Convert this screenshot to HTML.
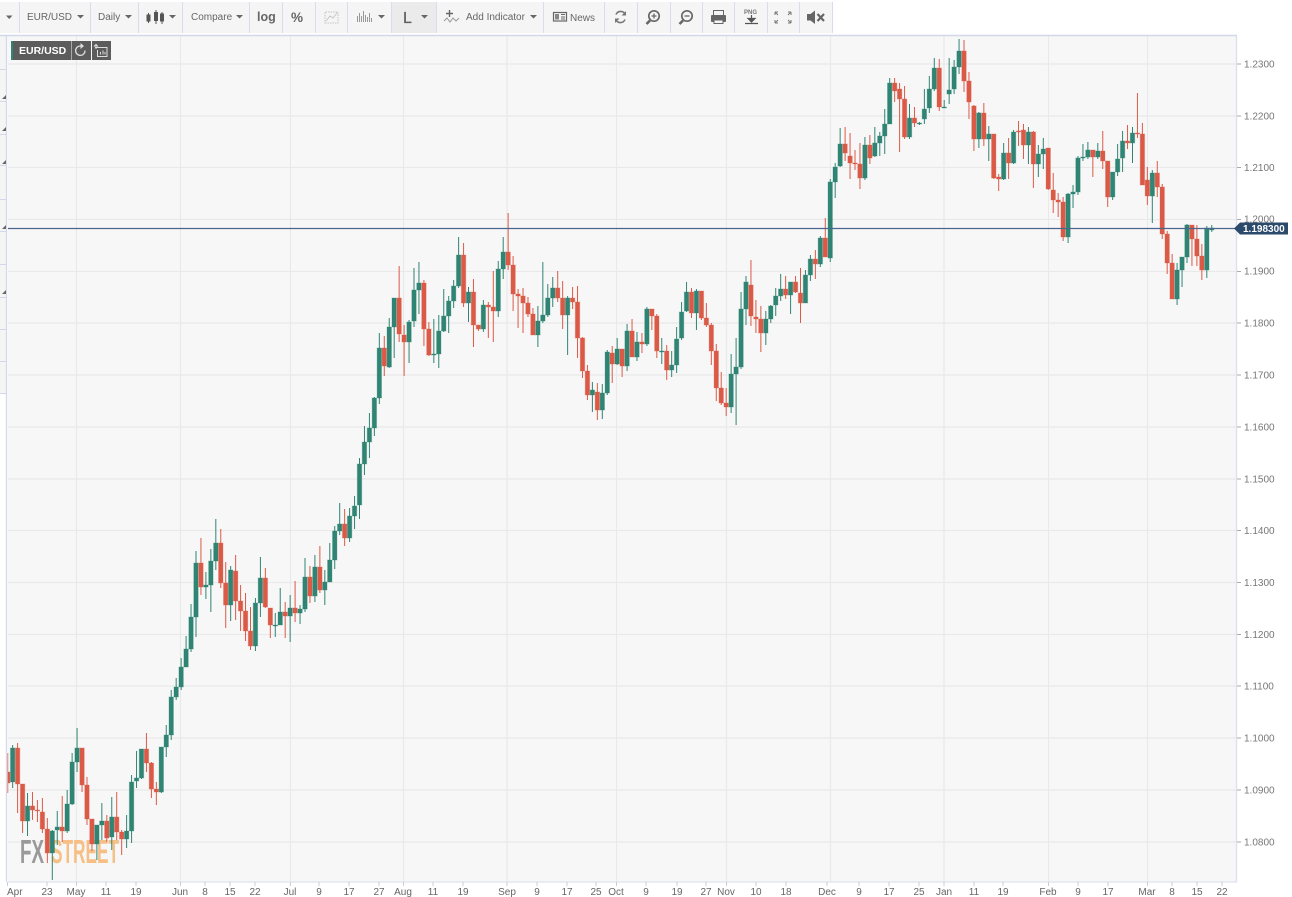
<!DOCTYPE html>
<html><head><meta charset="utf-8"><title>EUR/USD</title>
<style>
html,body{margin:0;padding:0;background:#fff;width:1292px;height:897px;overflow:hidden}
svg{display:block;position:absolute;left:0;top:0;filter:blur(.3px)}
text{font-family:"Liberation Sans",Arial,sans-serif}
.t{font-size:10px;fill:#666}
.p{font-size:10px;fill:#777}
.x{font-size:10px;fill:#666;text-anchor:middle}
</style></head><body>
<svg width="1292" height="897" viewBox="0 0 1292 897" xmlns="http://www.w3.org/2000/svg">
<defs><clipPath id="cl"><rect x="7.500" y="36" width="1229" height="846"/></clipPath></defs>
<rect x="8" y="36" width="1229" height="846" fill="#f7f7f7"/>
<!-- left sidebar -->
<g>
<rect x="0" y="36" width="7" height="358" fill="#f5f5f5"/>
<path d="M0 69.5H7M0 101.5H7M0 134.5H7M0 165.5H7M0 199.5H7M0 231.5H7M0 264.5H7M0 297.5H7M0 329.5H7M0 361.5H7M0 393.5H7" stroke="#d3d8e8" stroke-width="1"/>
<path d="M6.5 36V882" stroke="#d5daea" stroke-width="1.4"/>
<path d="M2 99L6 95V99ZM2 131L6 127V131ZM2 164L6 160V164ZM2 229L6 225V229ZM2 294L6 290V294Z" fill="#666"/>
</g>
<!-- grid -->
<path d="M8 64H1237M8 116H1237M8 167.5H1237M8 219.5H1237M8 271.5H1237M8 323H1237M8 375H1237M8 427H1237M8 479H1237M8 530.5H1237M8 582.5H1237M8 634.5H1237M8 686H1237M8 738H1237M8 790H1237M8 842H1237" stroke="#e9e9e9" stroke-width="1.2" fill="none"/>
<path d="M76.5 36V882M180.5 36V882M290.5 36V882M403.5 36V882M507 36V882M616.5 36V882M726.5 36V882M830.5 36V882M944 36V882M1048.5 36V882M1147.5 36V882" stroke="#e9e9e9" stroke-width="1.2" fill="none"/>
<!-- watermark -->
<text x="20" y="863" font-size="33" font-weight="700" fill="#9a9a9a" textLength="24" lengthAdjust="spacingAndGlyphs">FX</text>
<text x="51" y="863" font-size="33" font-weight="700" fill="#f6bf86" textLength="68" lengthAdjust="spacingAndGlyphs">STREET</text>
<g id="c" clip-path="url(#cl)"></g>
<!-- price line -->
<path d="M8 228.5H1237" stroke="#4a668c" stroke-width="1.2"/>
<!-- axes -->
<path d="M1236.5 36V882" stroke="#dde1ee" stroke-width="1.4"/>
<path d="M8 882H1237" stroke="#dfe3ef" stroke-width="1.2"/>
<path d="M1237 64H1241M1237 116H1241M1237 167.5H1241M1237 219.5H1241M1237 271.5H1241M1237 323H1241M1237 375H1241M1237 427H1241M1237 479H1241M1237 530.5H1241M1237 582.5H1241M1237 634.5H1241M1237 686H1241M1237 738H1241M1237 790H1241M1237 842H1241" stroke="#aaa" stroke-width="1"/>
<g class="p">
<text class="p" x="1244" y="67.5">1.2300</text><text class="p" x="1244" y="119.5">1.2200</text><text class="p" x="1244" y="171">1.2100</text><text class="p" x="1244" y="222.5">1.2000</text><text class="p" x="1244" y="274.5">1.1900</text><text class="p" x="1244" y="326.5">1.1800</text><text class="p" x="1244" y="378.5">1.1700</text><text class="p" x="1244" y="430.5">1.1600</text><text class="p" x="1244" y="482.5">1.1500</text><text class="p" x="1244" y="534">1.1400</text><text class="p" x="1244" y="586">1.1300</text><text class="p" x="1244" y="638">1.1200</text><text class="p" x="1244" y="689.5">1.1100</text><text class="p" x="1244" y="741.5">1.1000</text><text class="p" x="1244" y="793.5">1.0900</text><text class="p" x="1244" y="845.5">1.0800</text>
</g>
<path d="M1234 228.5L1240 222.5H1288V234.5H1240Z" fill="#2c4a6b"/>
<text x="1243" y="232" font-size="10" font-weight="700" fill="#fff">1.198300</text>
<!-- x labels -->
<path d="M7.5 882V886M47 882V886M76.5 882V886M106 882V886M136 882V886M180.5 882V886M205 882V886M230 882V886M255 882V886M290.5 882V886M319 882V886M349 882V886M379 882V886M403.5 882V886M433 882V886M463 882V886M507 882V886M537 882V886M567 882V886M596 882V886M616.5 882V886M646 882V886M677 882V886M706 882V886M726.5 882V886M756 882V886M786 882V886M827 882V886M859 882V886M889 882V886M919 882V886M944 882V886M974 882V886M1003 882V886M1048.5 882V886M1078 882V886M1108 882V886M1147.5 882V886M1172 882V886M1197 882V886M1222 882V886" stroke="#c8cddc" stroke-width="1"/>
<text x="7" y="895" class="t">Apr</text>
<text class="x" x="47" y="895">23</text><text class="x" x="76" y="895">May</text><text class="x" x="106" y="895">11</text><text class="x" x="136" y="895">19</text><text class="x" x="180" y="895">Jun</text><text class="x" x="205" y="895">8</text><text class="x" x="230" y="895">15</text><text class="x" x="255" y="895">22</text><text class="x" x="290" y="895">Jul</text><text class="x" x="319" y="895">9</text><text class="x" x="349" y="895">17</text><text class="x" x="379" y="895">27</text><text class="x" x="403" y="895">Aug</text><text class="x" x="433" y="895">11</text><text class="x" x="463" y="895">19</text><text class="x" x="507" y="895">Sep</text><text class="x" x="537" y="895">9</text><text class="x" x="567" y="895">17</text><text class="x" x="596" y="895">25</text><text class="x" x="616" y="895">Oct</text><text class="x" x="646" y="895">9</text><text class="x" x="677" y="895">19</text><text class="x" x="706" y="895">27</text><text class="x" x="726" y="895">Nov</text><text class="x" x="756" y="895">10</text><text class="x" x="786" y="895">18</text><text class="x" x="827" y="895">Dec</text><text class="x" x="859" y="895">9</text><text class="x" x="889" y="895">17</text><text class="x" x="919" y="895">25</text><text class="x" x="944" y="895">Jan</text><text class="x" x="974" y="895">11</text><text class="x" x="1003" y="895">19</text><text class="x" x="1048" y="895">Feb</text><text class="x" x="1078" y="895">9</text><text class="x" x="1108" y="895">17</text><text class="x" x="1147" y="895">Mar</text><text class="x" x="1172" y="895">8</text><text class="x" x="1197" y="895">15</text><text class="x" x="1222" y="895">22</text>
<!-- toolbar -->
<rect x="0" y="2" width="833" height="31" fill="#f5f5f5"/>
<rect x="391" y="2" width="45" height="31" fill="#ebebeb"/>
<path d="M0 35.5H1237" stroke="#d2d8ea" stroke-width="1.4"/>
<path d="M19.5 2V33M90.5 2V33M138.5 2V33M182.5 2V33M249.5 2V33M282.5 2V33M315.5 2V33M347.5 2V33M391.5 2V33M436.5 2V33M543.5 2V33M604.5 2V33M637.5 2V33M670.5 2V33M702.5 2V33M734.5 2V33M767.5 2V33M799.5 2V33M832.5 2V33" stroke="#d8ddec" stroke-width="1"/>
<g fill="#666">
<path d="M6 15.5H12.5L9.2 19ZM77 15H84L80.5 18.5ZM125 15H132L128.5 18.5ZM169 15H176L172.5 18.5ZM236 15H243L239.5 18.5ZM378 15H385L381.5 18.5ZM421 15H428L424.5 18.5ZM530 15H537L533.5 18.5Z"/>
</g>
<text x="27" y="20" class="t">EUR/USD</text>
<text x="98" y="20" class="t">Daily</text>
<text x="191" y="20" class="t">Compare</text>
<text x="257" y="21" font-size="12.5" font-weight="700" fill="#666">log</text>
<text x="291" y="22" font-size="13.5" font-weight="700" fill="#666">%</text>
<text x="403" y="23" font-size="16" font-weight="400" fill="#606060" stroke="#606060" stroke-width=".25">L</text>
<text x="466" y="20" class="t">Add Indicator</text>
<text x="570" y="21" class="t">News</text>
<!-- candle icon -->
<g fill="#555" stroke="#555" stroke-width="1"><path d="M148.5 13V23M156 10V24M162 12V24" fill="none"/><rect x="147" y="15" width="3" height="6"/><rect x="154.5" y="12.5" width="3" height="8"/><rect x="160.5" y="14" width="3" height="7"/></g>
<!-- dim chart icon -->
<g stroke="#c4c4c4" stroke-width="1" fill="none"><path d="M325 23H338V12H325V23Z" stroke-dasharray="1.5 1"/><path d="M326 21L330 16L333 18L337 13"/></g>
<!-- bars icon -->
<path d="M357.5 22V16M359.5 22V13M361.5 22V16M363.5 22V11M365.5 22V15M367.5 22V17M369.5 22V13M371.5 22V18" stroke="#999" stroke-width="1" fill="none"/>
<!-- add indicator icon -->
<g fill="none" stroke="#777" stroke-width="1"><path d="M449.5 10V17M446 13.5H453" stroke-width="1.4" stroke="#666"/><path d="M444 21L447 18L450 22L453 18L456 21L459 18" stroke="#999"/></g>
<!-- news icon -->
<g fill="none" stroke="#666" stroke-width="1.2"><rect x="553.5" y="12.5" width="13" height="8.5"/><rect x="555" y="14" width="4" height="5.5" fill="#888" stroke="none"/><path d="M561 14.5H565M561 17H565M561 19H565" stroke-width=".9"/></g>
<!-- refresh -->
<g fill="none" stroke="#777" stroke-width="1.6"><path d="M616 14.5A5 5 0 0 1 625 14"/><path d="M625 19.5A5 5 0 0 1 616 20"/></g>
<path d="M626 11V15.5H621.5ZM615 23V18.5H619.5Z" fill="#777"/>
<!-- zoom in/out -->
<g fill="none" stroke="#666" stroke-width="1.7"><circle cx="654" cy="16" r="5.2"/><path d="M650 20.5L646.5 24" stroke-width="2.6"/><path d="M651.5 16H656.5M654 13.5V18.5" stroke-width="1.3"/><circle cx="687" cy="16" r="5.2"/><path d="M683 20.5L679.5 24" stroke-width="2.6"/><path d="M684.5 16H689.5" stroke-width="1.3"/></g>
<!-- print -->
<g><rect x="711" y="15" width="15" height="7" rx="1" fill="#666"/><rect x="713.5" y="10.5" width="10" height="5" fill="#f5f5f5" stroke="#666"/><rect x="714" y="20" width="9" height="3.5" fill="#f5f5f5" stroke="#666" stroke-width="1"/></g>
<!-- png -->
<text x="744" y="14" font-size="6" font-weight="700" fill="#777">PNG</text>
<path d="M751.5 15V21M748 18.5L751.5 22L755 18.5ZM745 23.5H758" stroke="#555" stroke-width="1.2" fill="#555"/>
<!-- fullscreen -->
<g fill="none" stroke="#777" stroke-width="1"><path d="M775 12H778M775 12V15M775 12L778 15M791 12H788M791 12V15M791 12L788 15M775 23H778M775 23V20M775 23L778 20M791 23H788M791 23V20M791 23L788 20"/></g>
<!-- mute -->
<path d="M807 14H810.5L815 10.5V24L810.5 20.5H807Z" fill="#666"/>
<path d="M817.5 14L824 21M824 14L817.5 21" stroke="#666" stroke-width="2.2" fill="none"/>
<!-- label box -->
<rect x="11" y="41" width="60" height="19" fill="#5c5c5c"/>
<rect x="11" y="41" width="2" height="19" fill="#2f8473"/>
<text x="19" y="54" font-size="10.5" font-weight="700" fill="#fff">EUR/USD</text>
<rect x="71.500" y="41" width="19.5" height="19" fill="#5c5c5c"/>
<rect x="92" y="41" width="19" height="19" fill="#5c5c5c"/>
<path d="M85 50.500A4.700 4.700 0 1 1 80.500 46" fill="none" stroke="#ddd" stroke-width="1.3"/>
<path d="M80.500 43V49L84 46Z" fill="#ddd"/>
<g fill="none" stroke="#ddd" stroke-width="1"><path d="M95 47.500H107V56.500H97.500V50"/><path d="M100.500 54.500V52M103 54.500V50.500M105 54.500V52" /><path d="M96 44.500V49M94 46.500L96 44.500L98 46.500"/></g>
</svg>
<script>
var d="r772,783,753,793 g748,782,745,788 r748,784,743,813 r784,821,784,833 g806,821,793,836 r806,810,792,820 r810,811,800,822 r812,829,798,833 r829,853,818,863 g831,853,830,880 g827,830,811,845 r827,831,796,842 g804,831,790,833 g762,804,753,805 g748,762,728,772 r748,785,748,792 r785,819,777,825 r819,844,819,851 g825,844,825,860 g821,825,803,840 r821,838,815,842 g817,837,797,850 r817,832,792,840 r832,839,830,855 g831,839,815,848 g782,831,775,843 g778,781,751,788 g749,778,749,779 r749,763,733,772 r763,789,762,798 r789,792,782,805 g747,792,747,793 g735,747,725,757 g697,735,690,740 g687,697,678,700 g667,687,658,690 g649,667,636,667 g617,649,604,652 g563,617,551,637 r563,587,538,595 g585,587,572,599 g561,585,549,612 g543,561,519,570 r543,583,529,588 r583,605,562,628 g570,605,566,621 r571,601,555,620 r601,611,585,631 r611,631,593,641 r631,646,607,650 g603,646,598,651 g578,603,557,617 r578,607,568,608 r608,625,608,638 g625,626,613,637 g612,625,588,625 r612,616,602,638 g608,616,595,642 r608,613,581,622 g609,613,605,624 g577,609,558,612 r577,596,566,603 g567,596,555,602 r567,590,546,593 g582,590,570,605 g560,582,543,582 g531,560,526,569 g524,531,503,535 r524,538,509,546 g516,538,508,542 g506,516,496,529 g464,505,458,519 g442,464,426,475 g428,442,413,458 g398,428,397,436 g348,398,333,404 r348,366,336,376 g327,367,318,368 g298,327,298,358 r298,334,266,342 r335,342,325,376 g322,342,320,363 g290,321,268,327 g283,290,262,314 r283,329,280,346 r329,355,322,356 g354,355,319,363 g331,354,315,368 g316,331,289,332 g301,316,296,333 g286,301,280,308 g255,286,237,288 r255,303,243,307 g292,303,287,322 r292,325,279,347 r325,329,325,331 g305,329,300,332 r305,307,302,338 r307,311,271,342 g269,311,261,317 g252,269,237,279 r252,265,213,270 r265,294,256,311 r294,296,289,328 r296,303,288,333 r303,314,297,317 r314,335,308,335 g321,335,306,347 g315,321,262,323 g298,315,284,317 g288,298,277,307 r288,298,271,302 r298,315,281,329 g298,315,296,355 r298,302,287,309 r302,338,286,358 r338,371,337,378 r371,395,365,400 g390,395,382,412 r392,410,383,420 g393,410,384,419 g352,393,350,395 r353,364,346,383 g349,364,338,365 r349,366,349,377 g331,366,324,371 r331,357,319,357 g342,357,332,361 r342,344,333,353 g309,344,307,346 r309,316,309,330 r316,351,314,358 g351,352,338,364 r351,370,345,380 g365,370,351,377 g339,365,327,373 g312,338,302,340 g292,311,282,312 r292,313,288,318 g291,313,289,330 r291,318,291,320 r318,325,303,327 r325,351,323,365 r351,388,344,401 r388,403,372,405 r403,407,388,416 g374,407,354,413 g367,374,338,425 g309,367,292,369 g282,309,276,325 r285,316,260,326 r317,319,300,333 r319,333,306,352 g319,333,311,345 g306,319,305,323 g296,305,288,316 g289,296,274,301 r289,295,276,299 g282,295,282,314 r282,292,276,293 r293,303,268,323 g275,303,270,303 g259,275,255,281 r259,264,250,279 g238,264,236,267 r238,257,218,257 g182,258,179,262 g167,182,163,198 g144,166,128,167 r144,153,127,161 r156,163,133,179 r163,164,150,170 r164,178,143,189 g145,178,137,180 r145,158,135,164 g143,156,127,157 g136,143,132,156 g124,136,109,154 g83,124,78,124 r83,91,78,102 r89,99,83,152 r99,137,86,139 g118,137,104,139 r118,123,107,127 g123,124,122,125 g109,119,89,124 g89,108,76,113 g68,89,58,91 r68,107,59,111 g107,108,100,108 g90,94,58,104 g67,89,60,94 g51,67,39,74 r51,81,40,92 r81,102,72,119 r106,139,105,151 g113,139,112,148 r113,139,103,146 g134,139,126,161 r134,178,134,179 r177,179,174,191 g153,179,143,180 r153,163,138,179 g132,163,130,164 r131,132,121,146 r130,145,124,159 g132,145,127,164 r132,164,131,188 g154,164,145,177 g149,154,138,169 r148,189,148,190 r190,200,173,213 r200,202,193,217 r202,237,197,241 g194,237,193,243 g192,194,185,208 g158,192,156,195 g157,158,144,161 g150,157,142,159 r150,157,150,177 g151,157,143,159 r151,161,131,169 r161,197,161,207 g172,197,172,200 g159,172,144,176 g141,158,131,172 r141,143,125,149 g133,143,127,163 r133,134,93,138 r134,185,123,185 r180,196,167,205 g173,196,170,223 r173,187,161,197 r187,234,184,239 r234,263,231,274 r263,299,254,299 g270,299,263,305 g257,270,257,287 g225,257,224,263 r225,239,225,266 r239,256,225,266 r256,270,244,280 g228,270,226,278 g228,230,225,232".split(" ");
var s="";
for(var i=0;i<d.length;i++){
  var c=d[i][0]=="g"?"#2f8473":"#db5a47",v=d[i].slice(1).split(",").map(Number),x=7.7+4.955*i;
  s+='<path d="M'+x.toFixed(2)+' '+v[2]+'V'+v[3]+'" stroke="'+c+'" stroke-width="1" fill="none"/>';
  s+='<rect x="'+(x-2.2).toFixed(2)+'" y="'+v[0]+'" width="4.4" height="'+Math.max(v[1]-v[0],1)+'" fill="'+c+'" stroke="'+c+'" stroke-opacity=".3" stroke-width="1"/>';
}
document.getElementById("c").innerHTML=s;
</script>
</body></html>
